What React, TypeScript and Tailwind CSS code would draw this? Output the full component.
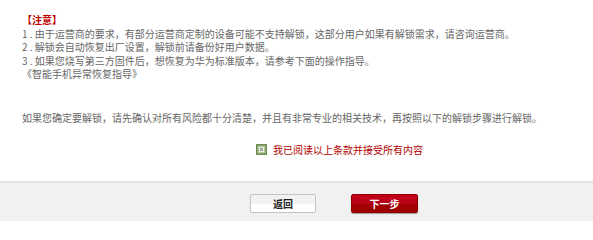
import React, { useState } from 'react';

const font = { fontFamily: '"Noto Sans CJK SC", "Liberation Sans", sans-serif' };

function AgreeBox({ checked, onToggle }: { checked: boolean; onToggle: () => void }) {
  return (
    <button onClick={onToggle} className="w-[11px] h-[11px] p-0 border-0 bg-transparent">
      <svg width="11" height="11" viewBox="0 0 11 11">
        <rect x="0.5" y="0.5" width="10" height="10" fill="#8aa56c" stroke="#6f8c52" />
        <rect x="2.5" y="2.5" width="6" height="6" fill="#f4f6f0" stroke="#b7c6a6" />
        {checked && <path d="M4 4 L7 7 M7 4 L4 7" stroke="#8a9a80" strokeWidth="1.2" />}
      </svg>
    </button>
  );
}

export default function App() {
  const [agreed, setAgreed] = useState(true);

  return (
    <div style={font} className="w-[593px] h-[221px] bg-white flex flex-col overflow-hidden">
      <div className="flex-1 pl-[22px] pt-[13px] text-[10px] leading-[13.5px] text-[#666]">
        <div className="text-[#c00000] font-bold">【注意】</div>
        <div>1 . 由于运营商的要求，有部分运营商定制的设备可能不支持解锁，这部分用户如果有解锁需求，请咨询运营商。</div>
        <div>2 . 解锁会自动恢复出厂设置，解锁前请备份好用户数据。</div>
        <div>3 . 如果您烧写第三方固件后，想恢复为华为标准版本，请参考下面的操作指导。</div>
        <div>《智能手机异常恢复指导》</div>

        <div className="mt-[30px]">
          如果您确定要解锁，请先确认对所有风险都十分清楚，并且有非常专业的相关技术，再按照以下的解锁步骤进行解锁。
        </div>

        <div className="mt-[19px] flex items-center gap-[6px] pl-[234px]">
          <AgreeBox checked={agreed} onToggle={() => setAgreed(!agreed)} />
          <span className="text-[#b00000] text-[10px]">我已阅读以上条款并接受所有内容</span>
        </div>
      </div>

      <div className="h-[40px] bg-[#f1f1f1] border-t-2 border-[#e2e2e2] flex items-start pt-[11px] pl-[250px] gap-[35px]">
        <button className="w-[66px] h-[19px] rounded-[2px] border border-[#c4c4c4] bg-[linear-gradient(#f2f2f2_0,#f2f2f2_50%,#ffffff_50%,#ffffff_100%)] text-[10px] font-bold text-[#222] leading-none">
          返回
        </button>
        <button className="w-[67px] h-[19px] rounded-[2px] border border-[#8e0000] bg-[linear-gradient(#c4001c_0,#b80016_50%,#a30000_50%,#9c0000_100%)] text-[10px] font-bold text-white leading-none shadow-[0_1px_1px_rgba(0,0,0,0.35)]">
          下一步
        </button>
      </div>
    </div>
  );
}
